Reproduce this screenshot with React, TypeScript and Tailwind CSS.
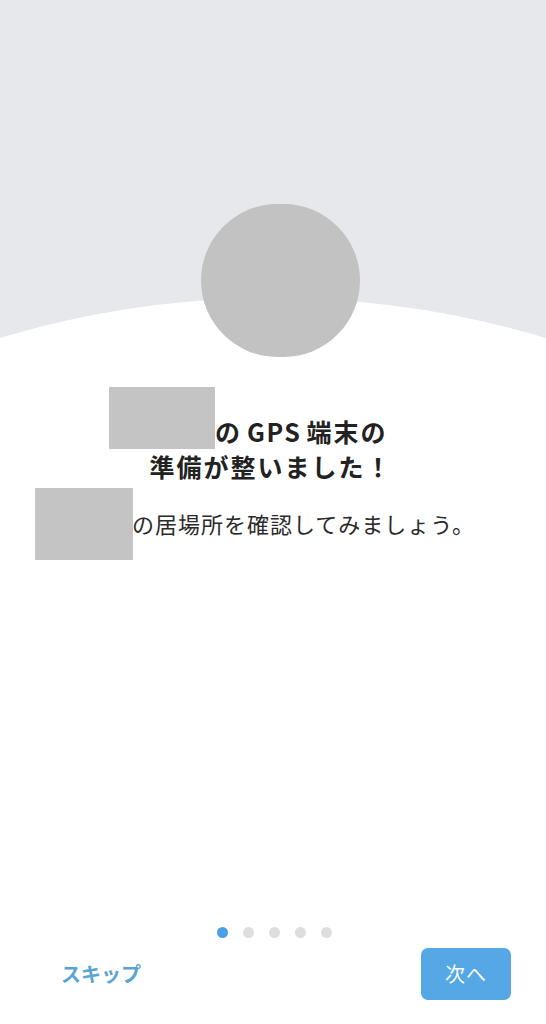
import React from 'react'

const font = { fontFamily: '"Noto Sans CJK JP", "Noto Sans", sans-serif' }

const Dots: React.FC<{ total: number; active: number }> = ({ total, active }) => (
  <div className="flex justify-center gap-[15px] pl-[2px]">
    {Array.from({ length: total }).map((_, i) => (
      <span
        key={i}
        className={`w-[11px] h-[11px] rounded-full ${i === active ? 'bg-[#4a9fe6]' : 'bg-[#dedede]'}`}
      />
    ))}
  </div>
)

const App: React.FC = () => {
  return (
    <div className="w-full h-[1024px] bg-white flex flex-col overflow-hidden" style={font}>
      {/* Hero */}
      <div className="relative h-[357px] bg-[#e6e8ec] shrink-0">
        <svg
          className="absolute left-0 top-[297px] w-full h-[60px]"
          viewBox="0 0 546 60"
          preserveAspectRatio="none"
        >
          <path d="M0 41 A951 951 0 0 1 546 41 V60 H0 Z" fill="#ffffff" />
        </svg>
        <div className="relative pt-[204px] pl-[201px]">
          <div className="w-[159px] h-[153px] rounded-full bg-[#c2c2c2]" />
        </div>
      </div>

      {/* Title */}
      <div className="mt-[30px] flex items-end pl-[109px]">
        <div className="w-[106px] h-[62px] bg-[#c4c4c4] shrink-0" />
        <h1 className="text-[25px] leading-[35px] font-bold text-[#222] tracking-[2px] whitespace-nowrap">
          の<span className="mx-[5px] tracking-[1.5px]">GPS</span>端末の
        </h1>
      </div>
      <h1 className="text-center pr-[4px] text-[25px] leading-[35px] font-bold text-[#222] tracking-[2px] whitespace-nowrap">
        準備が整いました！
      </h1>

      {/* Subtitle */}
      <div className="mt-[4px] flex items-center pl-[35px]">
        <div className="w-[98px] h-[72px] bg-[#c4c4c4] shrink-0" />
        <p className="text-[22px] leading-[30px] text-[#2a2a2a] tracking-[1px] whitespace-nowrap -mt-[3px] -ml-[1px]">
          の居場所を確認してみましょう。
        </p>
      </div>

      <div className="flex-1" />

      {/* Pager */}
      <Dots total={5} active={0} />

      <div className="mt-[10px] mb-[24px] flex items-center justify-between pl-[61px] pr-[35px]">
        <button className="text-[20px] font-bold text-[#5aa3d6]">スキップ</button>
        <button className="w-[90px] h-[52px] rounded-[7px] bg-[#55a7e6] text-white text-[20px] tracking-[1px]">
          次へ
        </button>
      </div>
    </div>
  )
}

export default App
